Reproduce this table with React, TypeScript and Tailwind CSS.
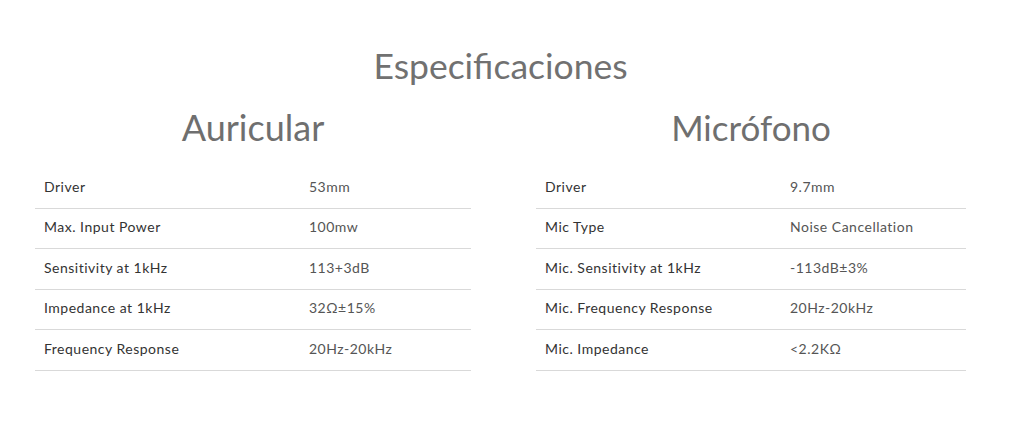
import React from "react";

const left: [string, string][] = [
  ["Driver", "53mm"],
  ["Max. Input Power", "100mw"],
  ["Sensitivity at 1kHz", "113+3dB"],
  ["Impedance at 1kHz", "32Ω±15%"],
  ["Frequency Response", "20Hz-20kHz"],
];
const right: [string, string][] = [
  ["Driver", "9.7mm"],
  ["Mic Type", "Noise Cancellation"],
  ["Mic. Sensitivity at 1kHz", "-113dB±3%"],
  ["Mic. Frequency Response", "20Hz-20kHz"],
  ["Mic. Impedance", "<2.2KΩ"],
];

function Table({ title, rows, labelW, titleSize }: { title: string; rows: [string, string][]; labelW: string; titleSize: string }) {
  return (
    <div className="flex flex-col">
      <h3 className={`text-center ${titleSize} leading-[40px] text-[#6f6f6f] font-normal h-[44px]`}>{title}</h3>
      <div className="mt-[17px] flex flex-col">
        {rows.map(([k, v], i) => (
          <div key={i} className="flex items-center h-[40.5px] border-b-[1.5px] border-[#d9d9d9] pl-[9px] pb-[3px] text-[14px] tracking-[0.5px]">
            <div className={`${labelW} text-[#333]`}>{k}</div>
            <div className="text-[#555]">{v}</div>
          </div>
        ))}
      </div>
    </div>
  );
}

export default function App() {
  return (
    <div className="w-[1024px] h-[423px] bg-white" style={{ fontFamily: "Lato, 'Noto Sans', sans-serif" }}>
      <div className="w-[1001px] pt-[44px] flex flex-col items-center">
        <h2 className="text-[35.5px] leading-[44px] text-[#717171] font-normal">Especificaciones</h2>
      </div>
      <div className="mt-[19px] flex pl-[35px] gap-[65px]">
        <div className="w-[436px]">
          <Table title="Auricular" rows={left} labelW="w-[265px]" titleSize="text-[36px]" />
        </div>
        <div className="w-[430px]">
          <Table title="Micrófono" rows={right} labelW="w-[245px]" titleSize="text-[35px]" />
        </div>
      </div>
    </div>
  );
}
